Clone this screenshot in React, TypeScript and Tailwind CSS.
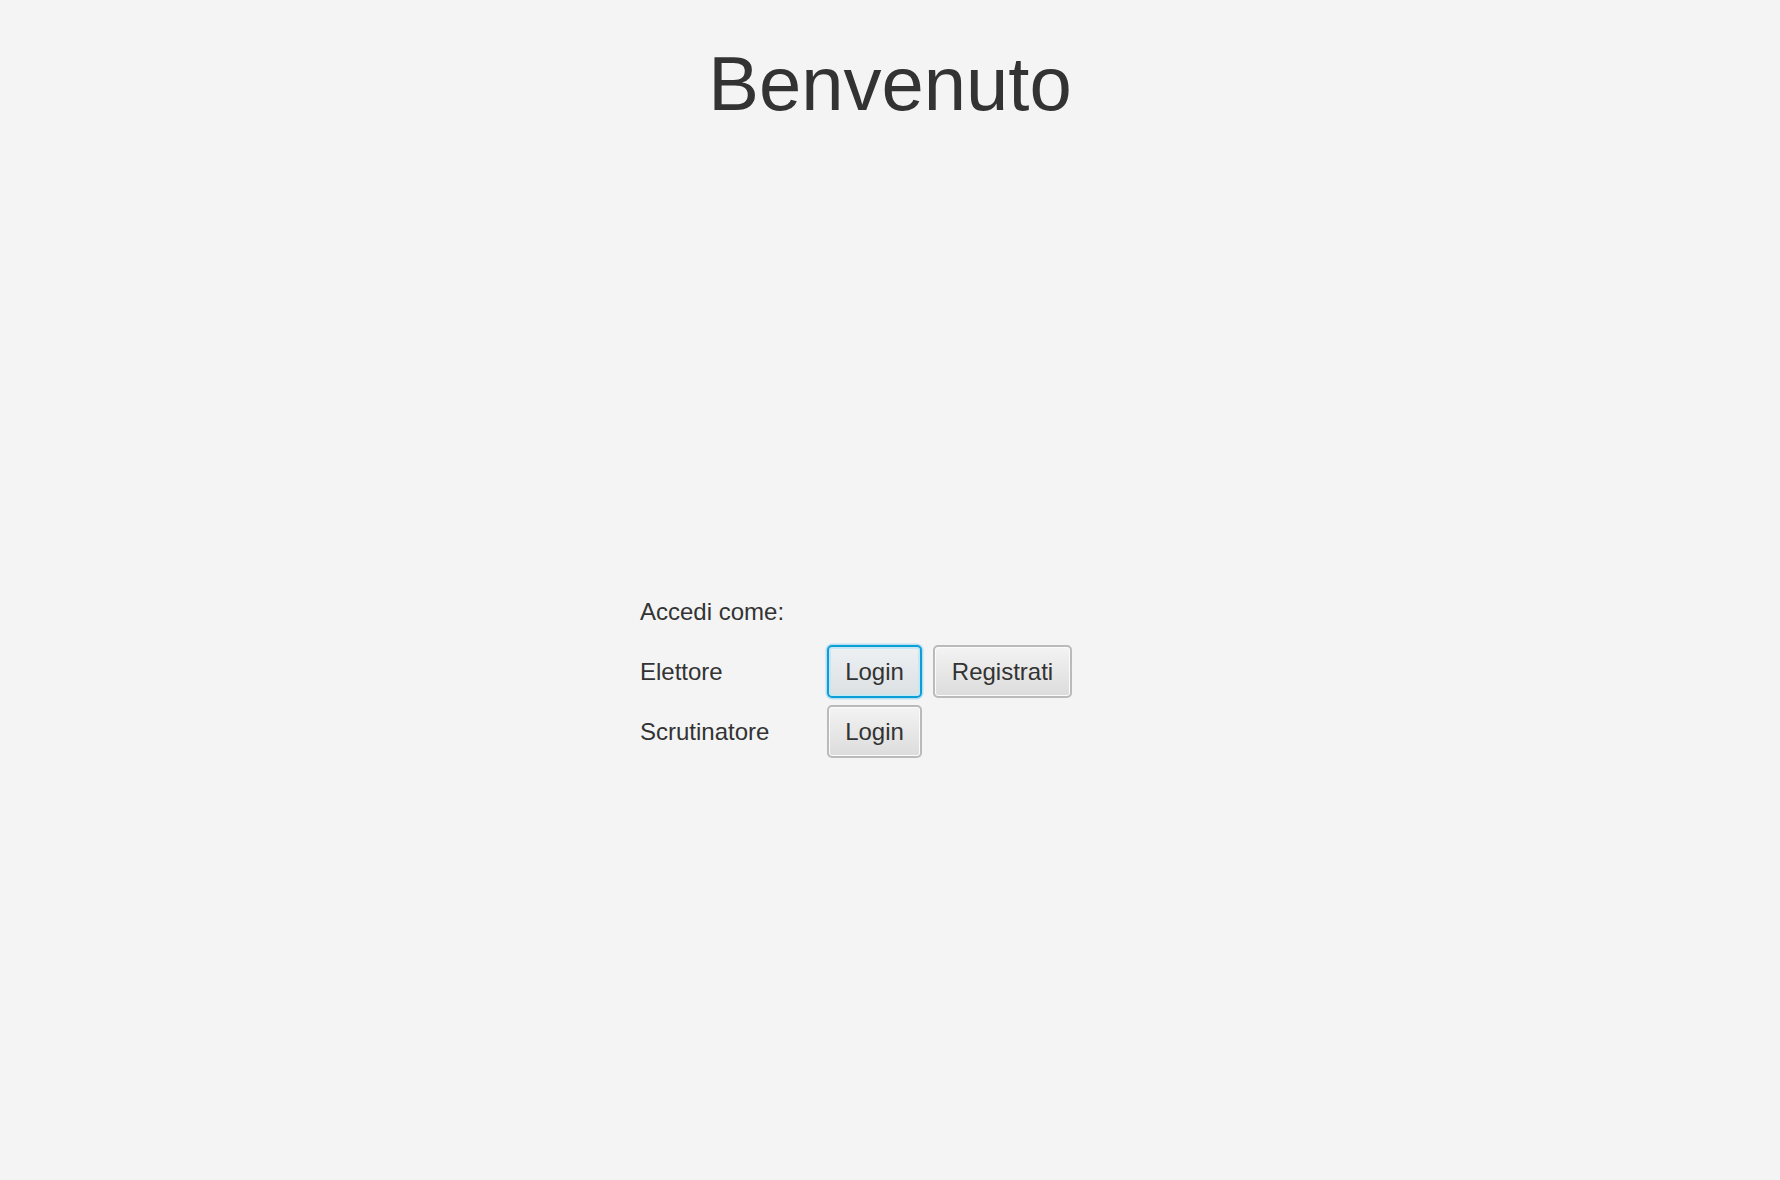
import React from "react"

const btn =
  "h-[53px] rounded-[5px] border-2 border-[#bababa] bg-gradient-to-b from-[#f3f3f3] to-[#dcdcdc] shadow-[inset_0_0_0_1px_#fbfbfb] text-[24px] leading-none text-[#333333] flex items-center justify-center"

export default function App() {
  return (
    <div className="min-h-[1180px] bg-[#f4f4f4] text-[#333333] font-['Liberation_Sans',Arial,sans-serif]">
      <h1 className="pt-[46px] text-center text-[76px] leading-none font-normal">Benvenuto</h1>

      <div className="mt-[463px] ml-[640px] grid grid-cols-[187px_auto] auto-rows-[53px] gap-y-[7px] items-center text-[24px] leading-none">
        <div>Accedi come:</div>
        <div />

        <div>Elettore</div>
        <div className="flex gap-[11px]">
          <button className="h-[53px] w-[95px] rounded-[5px] border-2 border-[#0a9fd6] bg-gradient-to-b from-[#eef1f3] to-[#dbe0e3] shadow-[0_0_0_1.5px_#b9def1,inset_0_0_0_2px_#c9e6f4] text-[24px] leading-none text-[#333333] flex items-center justify-center">
            Login
          </button>
          <button className={`${btn} w-[139px]`}>Registrati</button>
        </div>

        <div>Scrutinatore</div>
        <div className="flex">
          <button className={`${btn} w-[95px]`}>Login</button>
        </div>
      </div>
    </div>
  )
}
